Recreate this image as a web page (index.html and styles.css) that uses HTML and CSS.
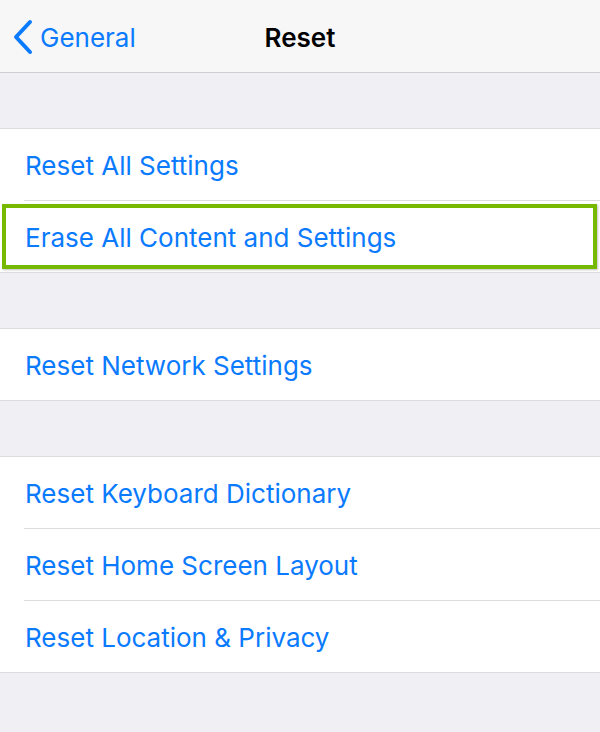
FILE: index.html
```html
<!DOCTYPE html>
<html>
<head>
<meta charset="utf-8">
<link rel="stylesheet" href="styles.css">
</head>
<body>
<div class="screen">
  <header class="nav">
    <div class="back">
      <svg class="chev" width="24" height="36" viewBox="0 0 24 36"><path d="M20 3 L6 18 L20 33" fill="none" stroke="#0a7aff" stroke-width="4" stroke-linecap="round" stroke-linejoin="round"/></svg>
      <span class="back-label">General</span>
    </div>
    <div class="title">Reset</div>
  </header>
  <div class="gap"></div>
  <section class="group">
    <div class="row"><span>Reset All Settings</span></div>
    <div class="row highlighted"><span>Erase All Content and Settings</span></div>
  </section>
  <div class="gap"></div>
  <section class="group">
    <div class="row"><span>Reset Network Settings</span></div>
  </section>
  <div class="gap"></div>
  <section class="group">
    <div class="row"><span>Reset Keyboard Dictionary</span></div>
    <div class="row"><span>Reset Home Screen Layout</span></div>
    <div class="row"><span>Reset Location &amp; Privacy</span></div>
  </section>
</div>
</body>
</html>
```
FILE: styles.css
```css
html, body {
  margin: 0;
  padding: 0;
  background: #efeff4;
}
.screen {
  width: 600px;
  height: 732px;
  overflow: hidden;
  font-family: Inter, Roboto, sans-serif;
  background: #efeff4;
}
.nav {
  height: 72px;
  background: #f7f7f7;
  border-bottom: 1px solid #cfcfd2;
  display: flex;
  align-items: center;
  position: relative;
}
.back {
  display: flex;
  align-items: center;
  padding-left: 10px;
  gap: 6px;
  color: #0a7aff;
  font-size: 26px;
  margin-top: 2px;
}
.title {
  position: absolute;
  left: 0;
  right: 0;
  text-align: center;
  font-weight: 600;
  font-size: 26px;
  color: #000;
  pointer-events: none;
  margin-top: 2px;
}
.gap {
  height: 55px;
}
.group {
  background: #fff;
  border-top: 1px solid #dcdce0;
  border-bottom: 1px solid #dcdce0;
}
.row {
  height: 71px;
  display: flex;
  align-items: center;
  padding-left: 25px;
  color: #0a7aff;
  font-size: 26px;
  position: relative;
}
.row span {
  margin-top: 2px;
}
.row + .row::before {
  content: "";
  position: absolute;
  left: 24px;
  right: 0;
  top: -1px;
  height: 1px;
  background: #dcdce0;
}
.row + .row {
  margin-top: 1px;
}
.highlighted::after {
  content: "";
  position: absolute;
  left: 2px;
  right: 3px;
  top: 3px;
  bottom: 3px;
  border: 4px solid #76b900;
  box-shadow: 1px 1px 2px rgba(0,0,0,0.25);
}
```
